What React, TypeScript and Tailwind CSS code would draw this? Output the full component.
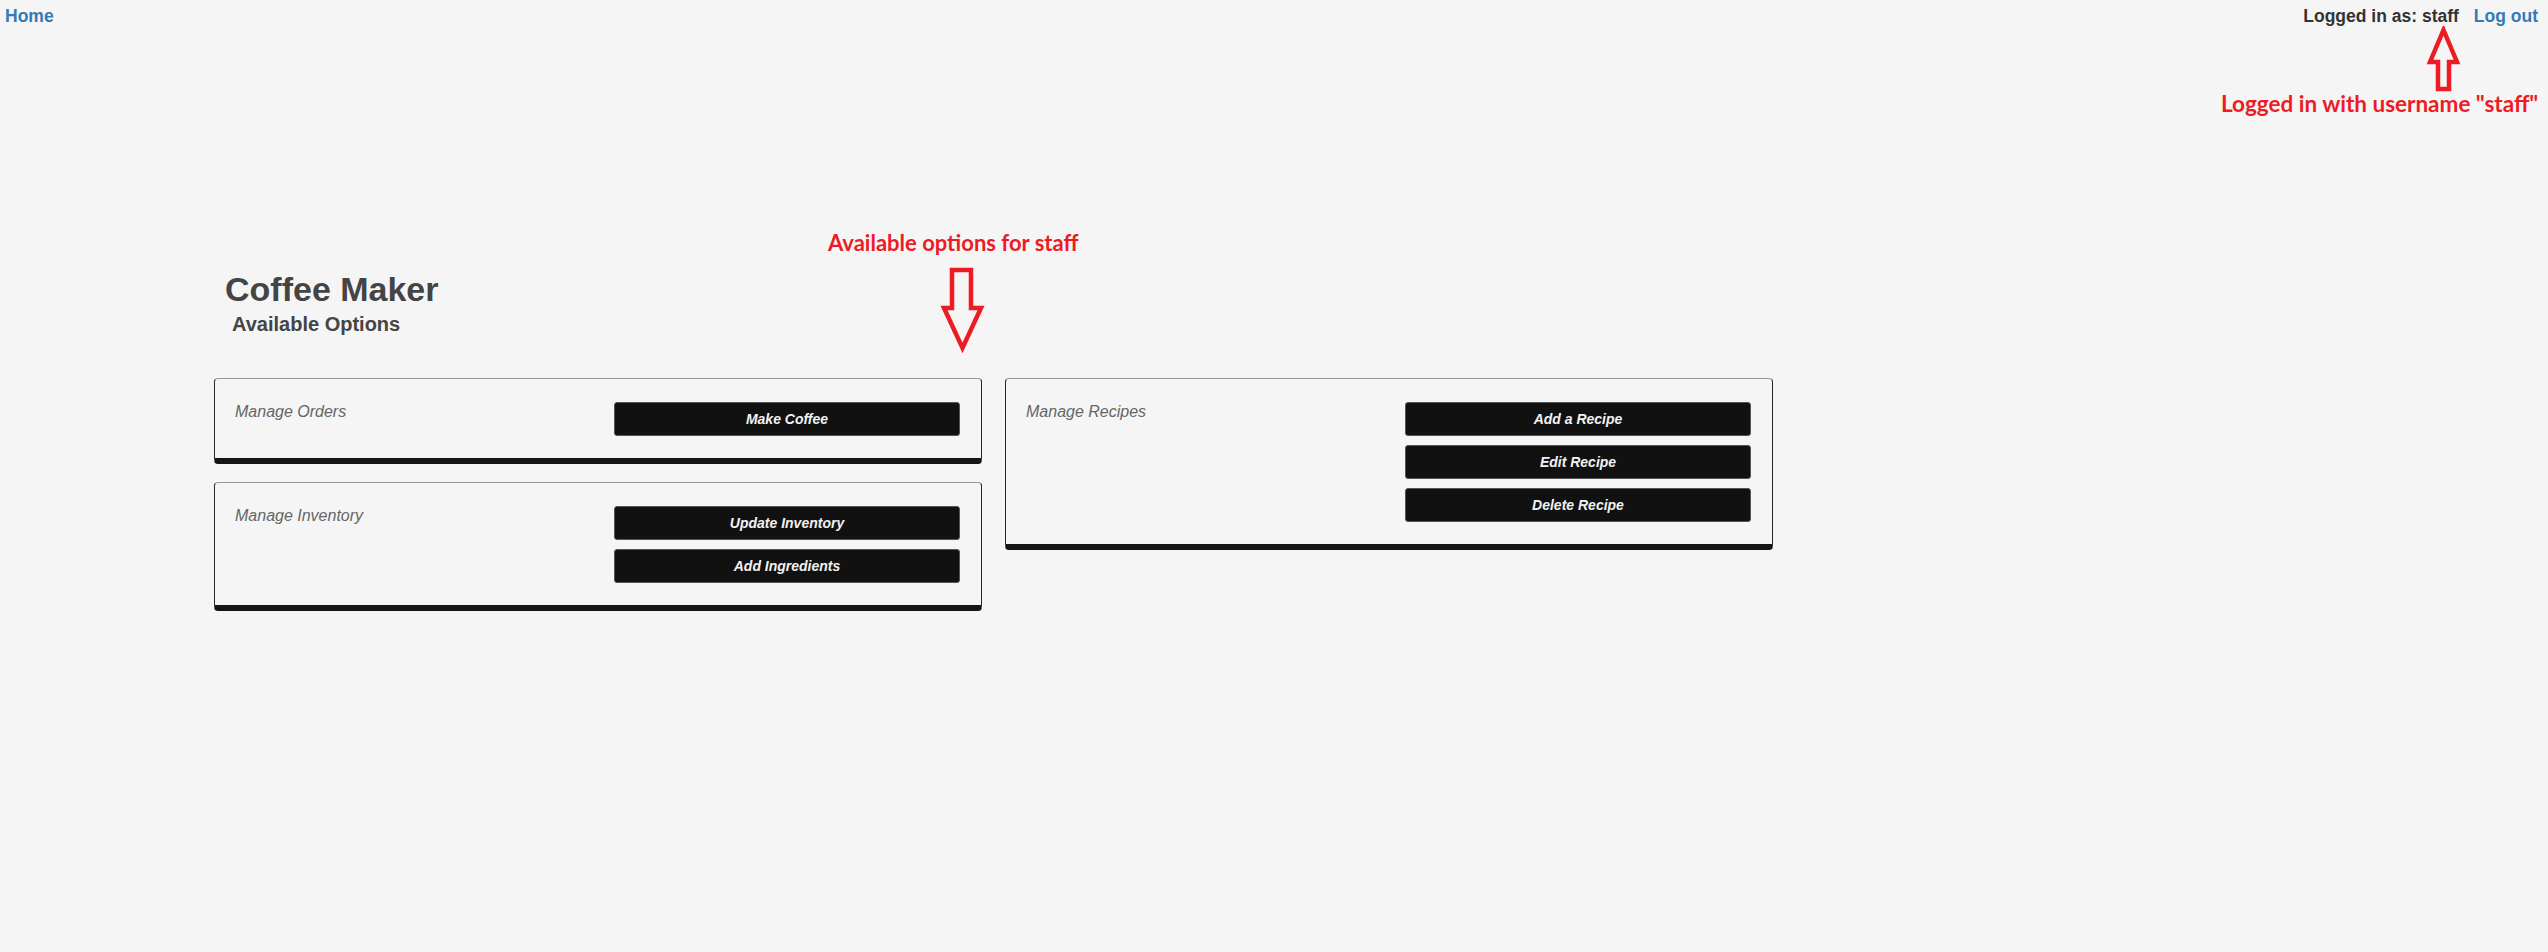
import React from "react";

const groups = [
    { title: "Manage Orders", actions: ["Make Coffee"] },
    { title: "Manage Inventory", actions: ["Update Inventory", "Add Ingredients"] },
];
const recipes = { title: "Manage Recipes", actions: ["Add a Recipe", "Edit Recipe", "Delete Recipe"] };

function OptionCard({ title, actions }: { title: string; actions: string[] }) {
    return (
        <div className="w-[768px] rounded-[4px] border border-[#262626] border-t-[#999] border-b-[6px] border-b-[#151515] pl-[20px] pr-[21px] pt-[23px] pb-[22px] flex justify-between">
            <div className="italic text-[16px] leading-[20px] text-[#666]">{title}</div>
            <div className="flex flex-col gap-[9px] w-[346px]">
                {actions.map((a) => (
                    <button
                        key={a}
                        className="h-[34px] w-full rounded-[3px] bg-[#111] border border-[#555] text-[#f2f2f2] text-[14px] font-bold italic"
                    >
                        {a}
                    </button>
                ))}
            </div>
        </div>
    );
}

export default function App() {
    return (
        <div className="relative min-h-screen bg-[#f5f5f5] font-['Liberation_Sans',Arial,sans-serif]">
            <nav className="flex justify-between items-start pl-[5px] pr-[10px] pt-[6px] text-[17.5px] leading-[20px] font-bold">
                <a href="#" className="text-[#337ab7]">Home</a>
                <div className="flex gap-[15px]">
                    <span className="text-[#333]">Logged in as: staff</span>
                    <a href="#" className="text-[#337ab7]">Log out</a>
                </div>
            </nav>

            <main className="pl-[214px] pt-[244px]">
                <h1 className="ml-[11px] text-[34px] leading-[38px] font-bold text-[#444]">Coffee Maker</h1>
                <h3 className="ml-[18px] mt-[4px] text-[20px] leading-[24px] font-bold text-[#444]">Available Options</h3>
                <div className="mt-[42px] flex gap-[23px] items-start">
                    <div className="flex flex-col gap-[18px]">
                        {groups.map((g) => (
                            <OptionCard key={g.title} title={g.title} actions={g.actions} />
                        ))}
                    </div>
                    <OptionCard title={recipes.title} actions={recipes.actions} />
                </div>
            </main>

            {/* red annotations drawn over the screenshot */}
            <div className="absolute left-[2221px] top-[91px] whitespace-nowrap font-['Lato',sans-serif] font-bold text-[22.5px] leading-[26px] text-[#ed1c24]">
                Logged in with username "staff"
            </div>
            <svg className="absolute left-[2426px] top-[26px]" width="36" height="68" viewBox="0 0 36 68">
                <polygon points="17.5,4 31,36 23,36 23,63 12,63 12,36 4,36" fill="none" stroke="#ed1c24" strokeWidth="4.5" />
            </svg>

            <div className="absolute left-[828px] top-[230px] whitespace-nowrap font-['Lato',sans-serif] font-bold text-[22px] leading-[26px] text-[#ed1c24]">
                Available options for staff
            </div>
            <svg className="absolute left-[940px] top-[266px]" width="46" height="88" viewBox="0 0 46 88">
                <polygon points="12,4 31,4 31,42 41,42 22.5,82 4,42 12,42" fill="none" stroke="#ed1c24" strokeWidth="4.5" />
            </svg>
        </div>
    );
}
